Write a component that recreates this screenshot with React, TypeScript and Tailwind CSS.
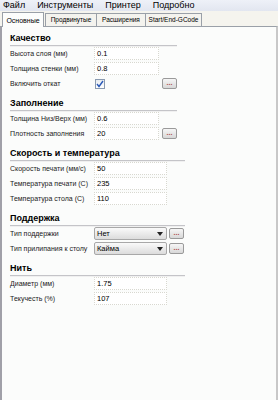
import React from 'react'

const font = { fontFamily: '"Liberation Sans", Arial, sans-serif' }

function Section({ title, line, children }: { title: string; line: string; children: React.ReactNode }): React.ReactElement {
  return (
    <div className="flex flex-col">
      <div className="h-[12px] whitespace-nowrap pl-[8px] text-[9px] font-bold leading-[12px] text-black">{title}</div>
      <div className={`ml-[8px] mt-[1px] h-[2px] border-t border-[#c4c4c8] bg-[#f0f0f0] ${line}`} />
      <div className="flex flex-col gap-[2px]">{children}</div>
    </div>
  )
}

function Row({ label, children }: { label: string; children: React.ReactNode }): React.ReactElement {
  return (
    <div className="flex h-[13px] items-center">
      <div className="w-[92px] shrink-0 whitespace-nowrap pl-[8px] text-[7px] leading-[13px] text-[#222]">{label}</div>
      {children}
    </div>
  )
}

function Input({ value, wide }: { value: string; wide?: boolean }): React.ReactElement {
  return (
    <div
      className={`h-[13px] border border-dotted border-[#d8d8d0] bg-white pl-[2px] text-[7.5px] leading-[11px] text-black ${
        wide ? 'w-[73px]' : 'w-[65px]'
      }`}
    >
      {value}
    </div>
  )
}

function Dots({ className }: { className: string }): React.ReactElement {
  return (
    <div
      className={`flex h-[11px] w-[15px] items-center justify-center rounded-[2px] border border-[#9a9a9a] bg-gradient-to-b from-[#f6f6f6] to-[#d8d8d8] pb-[2px] text-[7px] font-bold leading-none text-[#b04848] ${className}`}
    >
      ...
    </div>
  )
}

function Select({ value }: { value: string }): React.ReactElement {
  return (
    <div className="flex h-[13px] w-[73px] items-center justify-between rounded-[2px] border border-[#a8a8a8] bg-gradient-to-b from-[#fafafa] to-[#dcdcdc] pl-[2px] pr-[3px] text-[7.5px] leading-none text-black">
      <span>{value}</span>
      <svg width="6" height="4" viewBox="0 0 6 4">
        <path d="M0 0 L6 0 L3 4 Z" fill="#222" />
      </svg>
    </div>
  )
}

export default function App(): React.ReactElement {
  const menu = ['Файл', 'Инструменты', 'Принтер', 'Подробно']
  const tabs = [
    { t: 'Продвинутые', w: 'w-[52px]' },
    { t: 'Расширения', w: 'w-[50px]' },
    { t: 'Start/End-GCode', w: 'w-[57px]' }
  ]

  return (
    <div className="flex h-[400px] w-[278px] flex-col overflow-hidden bg-[#f3f2ec]" style={font}>
      {/* Menu */}
      <div className="flex h-[11px] items-center gap-[12px] bg-gradient-to-b from-[#eef1f8] to-[#e2e6f0] pl-[3px] text-[9px] leading-none text-black">
        {menu.map(m => (
          <span key={m}>{m}</span>
        ))}
      </div>

      {/* Tabs */}
      <div className="flex h-[15px] items-end bg-[#f5f4ee] pl-[2px]">
        <div className="z-10 -mb-px flex h-[15px] w-[42px] items-center justify-center border border-b-0 border-[#9aa0a8] bg-[#fcfdfc] text-[7px] leading-none text-black">
          Основные
        </div>
        <div className="w-[2px]" />
        {tabs.map(({ t, w }) => (
          <div
            key={t}
            className={`-ml-px flex h-[13px] items-center justify-center whitespace-nowrap border border-b-0 border-[#9aa0a8] bg-[#f4f3ee] text-[6.5px] leading-none text-black ${w}`}
          >
            {t}
          </div>
        ))}
      </div>

      {/* Panel */}
      <div className="flex flex-1 flex-col gap-[7px] border-l-2 border-r-2 border-t border-l-[#a0a0a8] border-r-[#c8c8c8] border-t-[#9aa0a8] bg-[#fbfcfb] pt-[5px]">
        <Section title="Качество" line="w-[167px]">
          <Row label="Высота слоя (мм)">
            <Input value="0.1" />
          </Row>
          <Row label="Толщина стенки (мм)">
            <Input value="0.8" />
          </Row>
          <Row label="Включить откат">
            <div className="ml-[1px] flex h-[10px] w-[10px] items-center justify-center border border-[#8a9ab0] bg-gradient-to-b from-[#e8ecf0] to-[#ffffff]">
              <svg width="8" height="8" viewBox="0 0 8 8">
                <path d="M1 4 L3 6.5 L7 1" fill="none" stroke="#2a5ab8" strokeWidth="1.4" />
              </svg>
            </div>
            <Dots className="ml-[57px]" />
          </Row>
        </Section>

        <Section title="Заполнение" line="w-[167px]">
          <Row label="Толщина Низ/Верх (мм)">
            <Input value="0.6" />
          </Row>
          <Row label="Плотность заполнения">
            <Input value="20" />
            <Dots className="ml-[3px]" />
          </Row>
        </Section>

        <Section title="Скорость и температура" line="w-[175px]">
          <Row label="Скорость печати (мм/с)">
            <Input value="50" wide />
          </Row>
          <Row label="Температура печати (С)">
            <Input value="235" wide />
          </Row>
          <Row label="Температура стола (С)">
            <Input value="110" wide />
          </Row>
        </Section>

        <Section title="Поддержка" line="w-[175px]">
          <Row label="Тип поддержки">
            <Select value="Нет" />
            <Dots className="ml-[2px]" />
          </Row>
          <Row label="Тип прилипания к столу">
            <Select value="Кайма" />
            <Dots className="ml-[2px]" />
          </Row>
        </Section>

        <Section title="Нить" line="w-[175px]">
          <Row label="Диаметр (мм)">
            <Input value="1.75" wide />
          </Row>
          <Row label="Текучесть (%)">
            <Input value="107" wide />
          </Row>
        </Section>
      </div>
    </div>
  )
}
